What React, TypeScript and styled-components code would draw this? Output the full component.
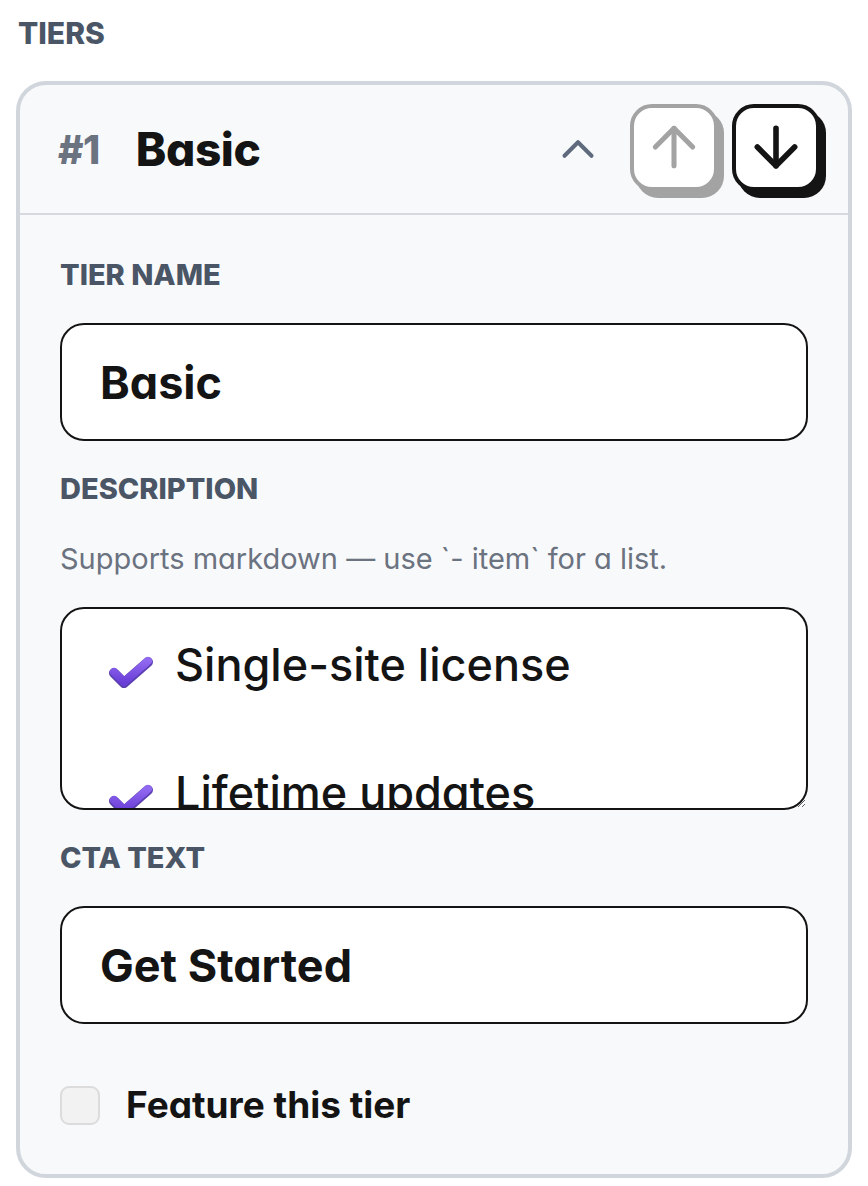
import React from "react";
import styled, { createGlobalStyle } from "styled-components";
import { ArrowUp, ArrowDown, ChevronUp } from "lucide-react";

const Global = createGlobalStyle`
  html, body { margin: 0; padding: 0; background: #ffffff; }
  body {
    font-family: Inter, "Noto Sans", sans-serif;
    font-feature-settings: "cv11" 1;
    color: #141414;
    -webkit-font-smoothing: antialiased;
  }
  * { box-sizing: border-box; }
`;

const Page = styled.div`
  padding: 14px 16px 11px;
`;

const SectionLabel = styled.div`
  font-size: 30px;
  font-weight: 800;
  color: #4a5566;
  line-height: 38px;
  padding-left: 2px;
  margin-bottom: 29px;
`;

const Card = styled.section`
  border: 4px solid #d1d5dc;
  border-radius: 30px;
  background: #f8f9fb;
  overflow: hidden;
`;

const Header = styled.header`
  display: flex;
  align-items: center;
  height: 130px;
  padding: 0 28px 0 38px;
  border-bottom: 2px solid #d6dae0;
`;

const Index = styled.span`
  font-size: 39px;
  font-weight: 800;
  color: #6b7280;
  letter-spacing: -0.5px;
`;

const Title = styled.h2`
  margin: 0 0 0 36px;
  font-size: 46px;
  font-weight: 800;
  letter-spacing: -0.4px;
  color: #141414;
  flex: 1;
`;

const Toggle = styled.button`
  border: 0;
  background: transparent;
  padding: 0;
  display: flex;
  color: #5f6b7d;
  margin-right: 25px;
`;

const MoveButton = styled.button<{ $disabled?: boolean }>`
  width: 88px;
  height: 87px;
  margin-left: ${(p) => (p.$disabled ? "0" : "14px")};
  margin-bottom: 4px;
  border-radius: 22px;
  background: #ffffff;
  display: flex;
  align-items: center;
  justify-content: center;
  border: 4px solid ${(p) => (p.$disabled ? "#a3a3a3" : "#141414")};
  box-shadow: 6px 7px 0 ${(p) => (p.$disabled ? "#a3a3a3" : "#141414")};
  color: ${(p) => (p.$disabled ? "#a3a3a3" : "#141414")};
  padding: 0;
`;

const Body = styled.div`
  padding: 42px 40px 49px;
  display: flex;
  flex-direction: column;
`;

const FieldLabel = styled.label<{ $gap?: number }>`
  display: block;
  margin-top: ${(p) => p.$gap ?? 0}px;
  font-size: 29px;
  font-weight: 800;
  color: #4a5566;
  line-height: 36px;
`;

const Hint = styled.p`
  margin: 34px 0 0;
  font-size: 29px;
  font-weight: 400;
  color: #6b7280;
  line-height: 36px;
`;

const TextInput = styled.input`
  display: block;
  width: 100%;
  height: 118px;
  margin-top: 30px;
  border: 2px solid #141414;
  border-radius: 24px;
  background: #ffffff;
  padding: 0 38px;
  font-family: inherit;
  font-feature-settings: "cv11" 1;
  font-size: 45px;
  font-weight: 700;
  color: #141414;
  outline: none;
`;

/* Markdown editor box: vertically resizable, content clipped like a textarea */
const Editor = styled.div`
  width: 100%;
  height: 203px;
  margin-top: 30px;
  border: 2px solid #141414;
  border-radius: 24px;
  background: #ffffff;
  padding: 24px 38px 0 46px;
  overflow: hidden;
  resize: vertical;
  font-size: 45px;
  font-weight: 500;
  line-height: 64px;
  color: #141414;
  outline: none;
`;

const EditorLine = styled.div`
  display: flex;
  align-items: center;
  gap: 21px;
  min-height: 64px;
  white-space: nowrap;
`;

const CheckGlyph = styled.svg`
  flex: none;
  width: 46px;
  height: 34px;
  margin-top: 12px;
`;

const CheckRow = styled.label`
  display: flex;
  align-items: center;
  gap: 26px;
  margin-top: 61px;
  font-size: 37px;
  font-weight: 700;
  line-height: 40px;
  color: #141414;
`;

const Box = styled.span`
  flex: none;
  width: 40px;
  height: 39px;
  border: 2px solid #dcdcdc;
  border-radius: 9px;
  background: #f2f2f2;
`;

function Check() {
  return (
    <CheckGlyph viewBox="0 0 46 34" aria-hidden="true">
      <defs>
        <linearGradient id="chk" x1="0" y1="0" x2="0" y2="1">
          <stop offset="0" stopColor="#9168f0" />
          <stop offset="1" stopColor="#6a3fd8" />
        </linearGradient>
      </defs>
      <polyline
        points="6,19 16,29 40,8"
        fill="none"
        stroke="#5a3fb0"
        strokeWidth="10"
        strokeLinecap="round"
        strokeLinejoin="round"
      />
      <polyline
        points="6,18 16,28 40,7"
        fill="none"
        stroke="url(#chk)"
        strokeWidth="8"
        strokeLinecap="round"
        strokeLinejoin="round"
      />
    </CheckGlyph>
  );
}

const description = ["Single-site license", "", "Lifetime updates"];

export default function App() {
  return (
    <Page>
      <Global />
      <SectionLabel>TIERS</SectionLabel>
      <Card>
        <Header>
          <Index>#1</Index>
          <Title>Basic</Title>
          <Toggle aria-label="Collapse">
            <ChevronUp size={54} strokeWidth={1.8} />
          </Toggle>
          <MoveButton $disabled aria-label="Move up">
            <ArrowUp size={64} strokeWidth={1.9} />
          </MoveButton>
          <MoveButton aria-label="Move down">
            <ArrowDown size={64} strokeWidth={2.1} />
          </MoveButton>
        </Header>
        <Body>
          <FieldLabel>TIER NAME</FieldLabel>
          <TextInput defaultValue="Basic" />
          <FieldLabel $gap={30}>DESCRIPTION</FieldLabel>
          <Hint>Supports markdown — use `- item` for a list.</Hint>
          <Editor role="textbox" aria-multiline="true" contentEditable suppressContentEditableWarning>
            {description.map((line, i) => (
              <EditorLine key={i}>
                {line && <Check />}
                {line}
              </EditorLine>
            ))}
          </Editor>
          <FieldLabel $gap={30}>CTA TEXT</FieldLabel>
          <TextInput defaultValue="Get Started" />
          <CheckRow>
            <Box />
            Feature this tier
          </CheckRow>
        </Body>
      </Card>
    </Page>
  );
}
